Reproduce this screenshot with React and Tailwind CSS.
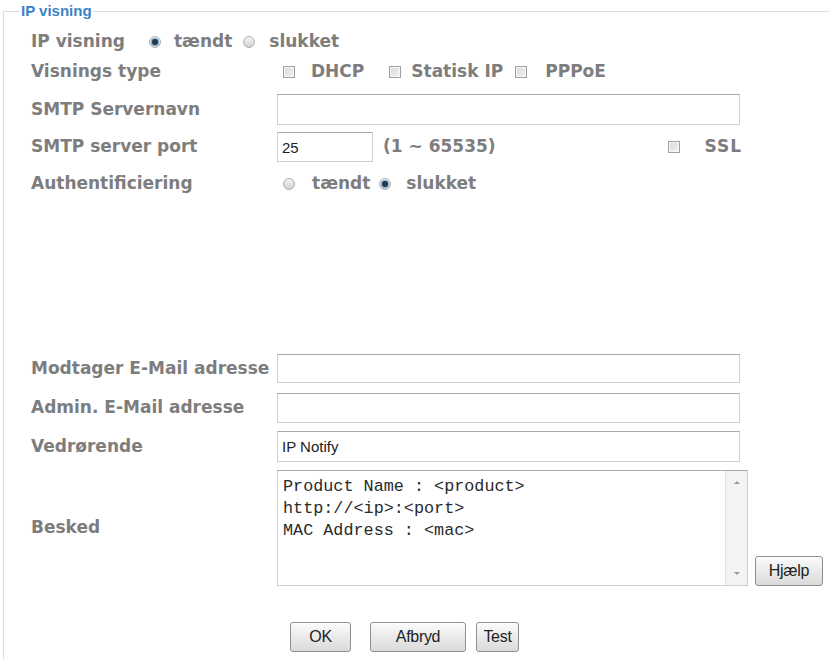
import React from 'react';

const label = "font-['DejaVu_Sans',Verdana,sans-serif] font-bold text-[17px] text-[#7d7d7d]";
const input = "h-full border border-[#cfcfcf] border-t-[#a9a9a9] bg-white px-[4px] font-['Liberation_Sans',Arial,sans-serif] text-[15px] text-[#222] outline-none";
const btn = "h-[30px] border border-[#8f8f8f] rounded-[3px] bg-gradient-to-b from-[#fbfbfb] to-[#dadada] font-['Liberation_Sans',Arial,sans-serif] text-[16px] tracking-[-0.3px] text-[#222] shadow-[inset_0_1px_0_#fff]";

function Radio({ checked }) {
  return (
    <span className="flex h-[12px] w-[12px] shrink-0 items-center justify-center rounded-full border border-[#b0b0b0] bg-gradient-to-b from-[#f4f4f4] to-[#d2d2d2]">
      {checked && <span className="h-[6px] w-[6px] rounded-full bg-[#1d3b55] shadow-[0_0_0_1px_#7fa6c4]" />}
    </span>
  );
}

function Check() {
  return <span className="block h-[12px] w-[12px] shrink-0 border border-[#a0a0a0] bg-gradient-to-br from-[#d8d8d8] to-[#f3f3f3] shadow-[inset_0_0_0_1px_#f8f8f8]" />;
}

function Row({ name, className = '', children }) {
  return (
    <div className={`flex items-center ${className}`}>
      <div className={`w-[246px] shrink-0 ${label}`}>{name}</div>
      {children}
    </div>
  );
}

export default function App() {
  return (
    <div className="h-[659px] overflow-hidden bg-white">
      <fieldset className="ml-[3px] mt-[2px] h-[720px] w-[825px] border border-[#dcdcdc] px-[16px]">
        <legend className="px-[1px] font-['Liberation_Sans',Arial,sans-serif] text-[15px] font-bold leading-[18px] text-[#3a84c6]">IP visning</legend>
        <div className="pl-[11px] pt-[7px]">
          <div className={`flex h-[30px] items-center ${label}`}>
            <span className="mr-[24px]">IP visning</span>
            <Radio checked />
            <span className="ml-[13px] mr-[11px]">tændt</span>
            <Radio />
            <span className="ml-[14px]">slukket</span>
          </div>

          <Row name="Visnings type" className="h-[30px]">
            <div className={`ml-[6px] flex items-center ${label}`}>
              <Check />
              <span className="ml-[16px] mr-[25px]">DHCP</span>
              <Check />
              <span className="ml-[10px] mr-[12px]">Statisk IP</span>
              <Check />
              <span className="ml-[18px]">PPPoE</span>
            </div>
          </Row>

          <Row name="SMTP Servernavn" className="mt-[7px] h-[31px]">
            <input className={`${input} w-[463px]`} />
          </Row>

          <Row name="SMTP server port" className="mt-[7px] h-[30px]">
            <input className={`${input} w-[96px]`} defaultValue="25" />
            <span className={`ml-[10px] ${label}`}>(1 ~ 65535)</span>
            <span className="ml-[172px]"><Check /></span>
            <span className={`ml-[25px] tracking-[1px] ${label}`}>SSL</span>
          </Row>

          <Row name="Authentificiering" className="mt-[7px] h-[30px]">
            <div className={`ml-[6px] flex items-center ${label}`}>
              <Radio />
              <span className="ml-[17px] mr-[9px]">tændt</span>
              <Radio checked />
              <span className="ml-[15px]">slukket</span>
            </div>
          </Row>

          <Row name="Modtager E-Mail adresse" className="mt-[155px] h-[29px]">
            <input className={`${input} w-[463px]`} />
          </Row>

          <Row name="Admin. E-Mail adresse" className="mt-[10px] h-[30px]">
            <input className={`${input} w-[463px]`} />
          </Row>

          <Row name="Vedrørende" className="mt-[8px] h-[31px]">
            <input className={`${input} w-[463px]`} defaultValue="IP Notify" />
          </Row>

          <div className="mt-[8px] flex h-[116px] items-center">
            <div className={`w-[246px] shrink-0 ${label}`}>Besked</div>
            <div className="flex h-full w-[471px] border border-[#cfcfcf] border-t-[#a9a9a9] bg-white">
              <textarea
                className="h-full flex-1 resize-none overflow-hidden px-[5px] pt-[5px] font-['Liberation_Mono','Courier_New',monospace] text-[16.8px] leading-[22px] text-[#2a2a2a] outline-none"
                defaultValue={'Product Name : <product>\nhttp://<ip>:<port>\nMAC Address : <mac>'}
              />
              <div className="flex w-[22px] flex-col items-center justify-between border-l border-[#e4e4e4] bg-[#f3f3f3] py-[10px]">
                <span className="h-0 w-0 border-x-[3px] border-b-[3px] border-x-transparent border-b-[#9a9a9a]" />
                <span className="h-0 w-0 border-x-[3px] border-t-[3px] border-x-transparent border-t-[#9a9a9a]" />
              </div>
            </div>
            <button className={`${btn} ml-[7px] self-end w-[68px]`}>Hjælp</button>
          </div>

          <div className="ml-[259px] mt-[36px] flex">
            <button className={`${btn} w-[61px]`}>OK</button>
            <button className={`${btn} ml-[19px] w-[96px]`}>Afbryd</button>
            <button className={`${btn} ml-[10px] w-[43px]`}>Test</button>
          </div>
        </div>
      </fieldset>
    </div>
  );
}
